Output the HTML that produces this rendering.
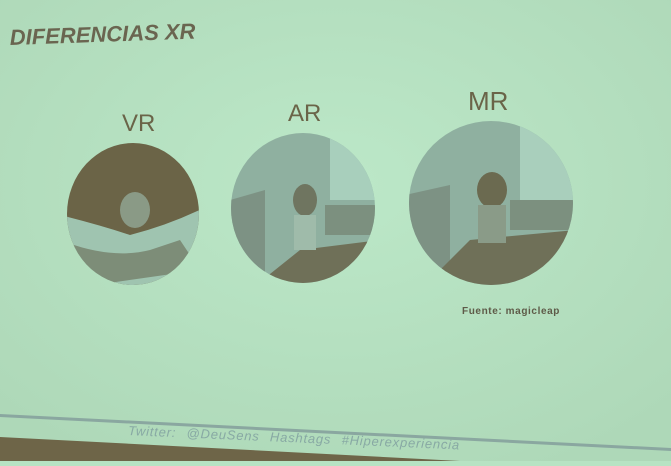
<!DOCTYPE html><html><head><style>html,body{margin:0;padding:0}body{width:671px;height:461px;overflow:hidden;background:#b7e3c3;font-family:"Liberation Sans",sans-serif}</style></head><body>
<svg width="671" height="461" viewBox="0 0 671 461" xmlns="http://www.w3.org/2000/svg">
<defs>
<radialGradient id="bg" cx="50%" cy="40%" r="70%"><stop offset="0" stop-color="#bce8c8"/><stop offset="1" stop-color="#aed8b8"/></radialGradient>
<clipPath id="c1"><ellipse cx="133" cy="214" rx="66" ry="71"/></clipPath>
<clipPath id="c2"><ellipse cx="303" cy="208" rx="72" ry="75"/></clipPath>
<clipPath id="c3"><ellipse cx="491" cy="203" rx="82" ry="82"/></clipPath>
</defs>
<rect width="671" height="461" fill="url(#bg)"/>
<text x="10" y="45" font-size="22" font-weight="bold" font-style="italic" fill="#6a6550" transform="rotate(-2 10 45)">DIFERENCIAS XR</text>
<text x="122" y="131" font-size="24" fill="#6a6448">VR</text>
<text x="288" y="121" font-size="24" fill="#6a6448">AR</text>
<text x="468" y="110" font-size="26" fill="#6a6448">MR</text>
<g clip-path="url(#c1)"><rect x="60" y="140" width="150" height="150" fill="#6b6447"/><path d="M60 215 Q100 225 130 235 Q170 225 210 205 L210 290 L60 290Z" fill="#9fc4b0"/><path d="M60 240 Q110 260 150 250 L180 240 L200 270 L60 290Z" fill="#7d8d78"/><ellipse cx="135" cy="210" rx="15" ry="18" fill="#8a9a86"/></g>
<g clip-path="url(#c2)"><rect x="230" y="130" width="150" height="160" fill="#8fb0a0"/><rect x="330" y="130" width="50" height="70" fill="#a8cfbc"/><path d="M230 200 L265 190 L265 290 L230 290Z" fill="#7d9284"/><path d="M300 250 L380 240 L380 290 L250 290Z" fill="#6f7058"/><rect x="325" y="205" width="55" height="30" fill="#7c907f"/><ellipse cx="305" cy="200" rx="12" ry="16" fill="#6f7560"/><rect x="294" y="215" width="22" height="35" fill="#9fbbaa"/></g>
<g clip-path="url(#c3)"><rect x="405" y="120" width="170" height="170" fill="#8fb0a0"/><rect x="520" y="120" width="55" height="80" fill="#a9cfbc"/><path d="M405 195 L450 185 L450 290 L405 290Z" fill="#7d9284"/><path d="M470 240 L575 230 L575 290 L420 290Z" fill="#6f7058"/><rect x="510" y="200" width="65" height="30" fill="#7c907f"/><ellipse cx="492" cy="190" rx="15" ry="18" fill="#6b6a50"/><rect x="478" y="205" width="28" height="38" fill="#8a9b88"/></g>
<text x="462" y="314" font-size="10" font-weight="bold" letter-spacing="0.6" fill="#5e5a48">Fuente: magicleap</text>
<path d="M0 414 L671 448 L671 451 L0 417Z" fill="#8aa7a0"/>
<text x="128" y="435" font-size="13" font-style="italic" letter-spacing="0.8" word-spacing="6" fill="#88a9a4" transform="rotate(2.5 128 435)">Twitter: @DeuSens  Hashtags #Hiperexperiencia</text>
<path d="M0 437 L460 461 L0 461Z" fill="#6e6548"/>
</svg>
</body></html>
